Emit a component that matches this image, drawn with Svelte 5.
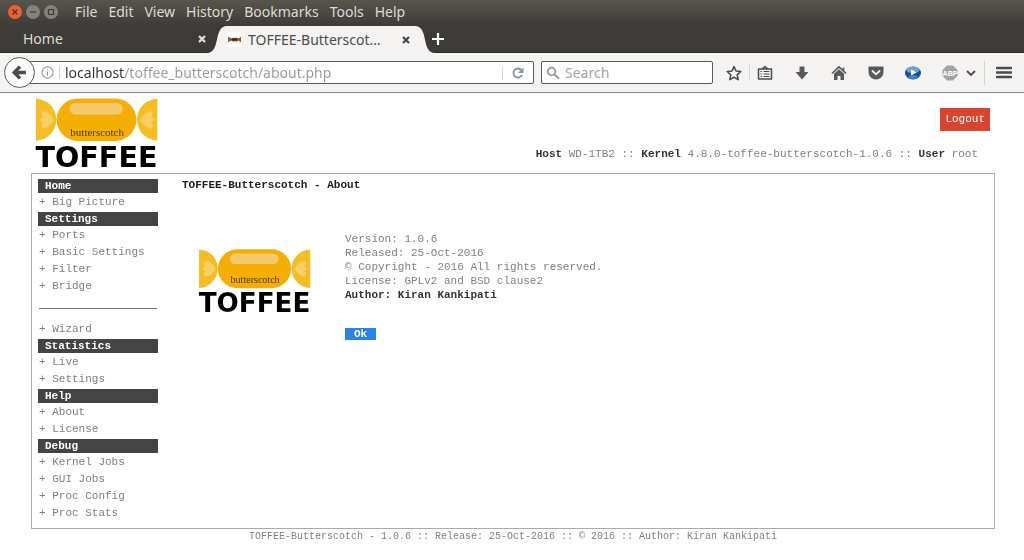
<script>
	const menus = ["File", "Edit", "View", "History", "Bookmarks", "Tools", "Help"];

	const sections = [
		{title: "Home", groups: [["Big Picture"]]},
		{title: "Settings", groups: [["Ports", "Basic Settings", "Filter", "Bridge"], ["Wizard"]]},
		{title: "Statistics", groups: [["Live", "Settings"]]},
		{title: "Help", groups: [["About", "License"]]},
		{title: "Debug", groups: [["Kernel Jobs", "GUI Jobs", "Proc Config", "Proc Stats"]]},
	];

	let url = $state("localhost/toffee_butterscotch/about.php");
	let query = $state("");
</script>

{#snippet logo()}
	<svg class="logo" viewBox="0 0 370 210" role="img" aria-label="Toffee butterscotch">
		<path d="M3 2C38 4 64 30 64 65S38 126 3 128Z" fill="#f6bd23" />
		<path d="M368 2C333 4 307 30 307 65S333 126 368 128Z" fill="#f6bd23" />
		<g fill="#f8dc93" opacity=".6">
			<ellipse cx="36" cy="54" rx="20" ry="10" transform="rotate(36 36 54)" />
			<ellipse cx="36" cy="65" rx="21" ry="9" />
			<ellipse cx="36" cy="76" rx="20" ry="10" transform="rotate(-36 36 76)" />
			<ellipse cx="337" cy="54" rx="20" ry="10" transform="rotate(-36 337 54)" />
			<ellipse cx="337" cy="65" rx="21" ry="9" />
			<ellipse cx="337" cy="76" rx="20" ry="10" transform="rotate(36 337 76)" />
		</g>
		<rect x="65" y="1" width="240" height="128" rx="64" fill="#f4ae04" />
		<rect x="104" y="15" width="160" height="34" rx="17" fill="#f5ca6c" />
		<text x="187" y="113" class="flavour">butterscotch</text>
		<text x="185" y="206" class="brand">TOFFEE</text>
	</svg>
{/snippet}

<div class="browser">
	<div class="menubar">
		<div class="window_buttons">
			<button class="close" aria-label="Close window">
				<svg viewBox="0 0 14 14"><path d="M4.5 4.5l5 5m0-5l-5 5" /></svg>
			</button>
			<button aria-label="Minimize window">
				<svg viewBox="0 0 14 14"><path d="M4 7h6" /></svg>
			</button>
			<button aria-label="Maximize window">
				<svg viewBox="0 0 14 14"><path d="M4.500 4.500h5v5h-5z" /></svg>
			</button>
		</div>
		{#each menus as menu}
			<button class="menu">{menu}</button>
		{/each}
	</div>

	<div class="tabs">
		<div class="tab">
			<button class="tab_title">Home</button>
			<button class="tab_close" aria-label="Close Home">
				<svg viewBox="0 0 10 10"><path d="M2 2l6 6m0-6l-6 6" /></svg>
			</button>
		</div>
		<div class="tab active">
			<svg class="ear" viewBox="0 0 20 27"><path d="M0 27C14 27 6 0 20 0V27Z" /></svg>
			<svg class="favicon" viewBox="0 0 16 16">
				<path d="M0 0h16v16H0z" fill="#fff" />
				<path d="M1 5l4 2 1-1h5l1 1 3-2v6l-3-2-1 1H6L5 9l-4 2z" fill="#8b5a36" />
				<path d="M5 7h6v2H5z" fill="#4b2410" />
			</svg>
			<button class="tab_title">TOFFEE-Butterscot…</button>
			<button class="tab_close" aria-label="Close TOFFEE-Butterscotch">
				<svg viewBox="0 0 10 10"><path d="M2 2l6 6m0-6l-6 6" /></svg>
			</button>
			<svg class="ear" viewBox="0 0 20 27"><path d="M20 27C6 27 14 0 0 0V27Z" /></svg>
		</div>
		<button class="new_tab" aria-label="New tab">
			<svg viewBox="0 0 14 14"><path d="M7 1v12M1 7h12" /></svg>
		</button>
	</div>

	<div class="toolbar">
		<button class="back" aria-label="Back">
			<svg viewBox="0 0 16 16"><path d="M8.500 2.500L3 8l5.500 5.500M3.500 8H14" /></svg>
		</button>
		<div class="url_bar">
			<svg class="info" viewBox="0 0 14 14">
				<circle cx="7" cy="7" r="6" />
				<path d="M7 6v4.500M7 3.500v1.200" />
			</svg>
			<input type="text" aria-label="Address" bind:value={url} />
			<button class="reload" aria-label="Reload">
				<svg viewBox="0 0 14 14">
					<path d="M10.500 4.200A4.500 4.500 0 1 0 11 9" fill="none" stroke="#8795a5" stroke-width="1.800" />
					<path d="M12.500 1.500V7H7z" fill="#8795a5" />
				</svg>
			</button>
		</div>
		<div class="search_bar">
			<svg viewBox="0 0 14 14"><circle cx="5.500" cy="5.500" r="3.800" /><path d="M8.500 8.500L13 12.500" /></svg>
			<input type="text" aria-label="Search" placeholder="Search" bind:value={query} />
		</div>
		<div class="tools">
			<button aria-label="Bookmark this page">
				<svg viewBox="0 0 16 16"><path d="M8 1.500l2 4.500 4.800.5-3.600 3.300 1 4.800L8 12.200l-4.200 2.400 1-4.800L1.200 6.500 6 6z" fill="none" stroke="#4c4c4c" stroke-width="1.600" stroke-linejoin="round" /></svg>
			</button>
			<button class="divided" aria-label="Bookmarks">
				<svg viewBox="0 0 16 16">
					<path d="M1.500 4h13v10h-13zM5 4l3-2.500L11 4" fill="none" stroke="#4c4c4c" stroke-width="1.500" stroke-linejoin="round" />
					<path d="M3.500 6.500H5M6.500 6.500h6M3.500 9H5M6.500 9h6M3.500 11.500H5M6.500 11.500h6" stroke="#4c4c4c" stroke-width="1.200" />
				</svg>
			</button>
			<button aria-label="Downloads">
				<svg viewBox="0 0 16 16"><path d="M5.500 1.500h5V7h4L8 14.500 1.500 7h4z" fill="#5a5a5a" /></svg>
			</button>
			<button aria-label="Home page">
				<svg viewBox="0 0 16 16">
					<path d="M1 8.500L8 2l7 6.500M12.500 2.500v4" fill="none" stroke="#5a5a5a" stroke-width="1.700" />
					<path d="M3 8.800L8 4.300l5 4.500V15H9.500v-4h-3v4H3z" fill="#5a5a5a" />
				</svg>
			</button>
			<button aria-label="Save to Pocket">
				<svg viewBox="0 0 16 16">
					<path d="M1.500 1.500h13q1 0 1 1V7a7.500 7.500 0 0 1-15 0V2.500q0-1 1-1z" fill="#5a5a5a" />
					<path d="M4.500 6L8 9.300 11.500 6" fill="none" stroke="#f4f3f2" stroke-width="1.800" stroke-linecap="round" />
				</svg>
			</button>
			<button aria-label="Video player">
				<svg viewBox="0 0 16 16">
					<ellipse cx="8" cy="8" rx="8" ry="6.500" fill="#164f97" />
					<ellipse cx="8" cy="5" rx="6.500" ry="3.300" fill="#6da3d8" />
					<ellipse cx="8" cy="12" rx="4.500" ry="2" fill="#2f88cf" />
					<path d="M6 4.500l5.500 3L6 10.500z" fill="#fff" />
				</svg>
			</button>
			<button aria-label="Adblock Plus">
				<svg viewBox="0 0 16 16">
					<path d="M5 .5h6L15.500 5v6L11 15.500H5L.5 11V5z" fill="#a3a3a3" />
					<text x="8" y="11" class="abp">ABP</text>
				</svg>
			</button>
			<button class="more" aria-label="Adblock menu">
				<svg viewBox="0 0 10 10"><path d="M1 3l4 4 4-4" fill="none" stroke="#4c4c4c" stroke-width="1.800" /></svg>
			</button>
			<button class="divided app_menu" aria-label="Open menu">
				<svg viewBox="0 0 16 16"><path d="M1 3h14M1 7.500h14M1 12h14" stroke="#4c4c4c" stroke-width="2.600" stroke-linecap="round" /></svg>
			</button>
		</div>
	</div>
</div>

<div class="page">
	<header>
		{@render logo()}
		<div class="session">
			<button class="logout">Logout</button>
			<div class="host">
				<b>Host</b> WD-1TB2 :: <b>Kernel</b> 4.8.0-toffee-butterscotch-1.0.6 :: <b>User</b> root
			</div>
		</div>
	</header>

	<div class="frame">
		<nav>
			{#each sections as section}
				<h2>{section.title}</h2>
				{#each section.groups as items, i}
					{#if i > 0}<hr />{/if}
					<ul>
						{#each items as item}
							<li><a href="#{item}">+ {item}</a></li>
						{/each}
					</ul>
				{/each}
			{/each}
		</nav>

		<main>
			<h1>TOFFEE-Butterscotch - About</h1>
			<div class="about">
				{@render logo()}
				<div class="details">
					<p>
						Version: 1.0.6<br />
						Released: 25-Oct-2016<br />
						© Copyright - 2016 All rights reserved.<br />
						License: GPLv2 and BSD clause2<br />
						<b>Author: Kiran Kankipati</b>
					</p>
					<button class="ok">Ok</button>
				</div>
			</div>
		</main>
	</div>

	<footer>TOFFEE-Butterscotch - 1.0.6 :: Release: 25-Oct-2016 :: © 2016 :: Author: Kiran Kankipati</footer>
</div>

<style>
	:global(body) { background: #fff; }

	button {
		padding: 0;
		border: none;
		background: none;
		color: inherit;
		font: inherit;
	}
	svg { display: block; flex: none; }

	/*
	 * BROWSER
	 * */
	.browser {
		font: 14px/20px "Noto Sans", "Open Sans", sans-serif;
		color: #dfdbd2;
		background: #3c3b37;
	}
	.menubar {
		display: flex;
		align-items: center;
		gap: 11px;
		height: 25px;
		padding: 0 8px 2px;
		box-sizing: border-box;
		background: linear-gradient(#57544c, #3e3d39);
	}
	.window_buttons {
		display: flex;
		gap: 4px;
		margin-right: 6px;
	}
	.window_buttons button {
		width: 14px;
		height: 14px;
		border-radius: 50%;
		background: #84827b;
	}
	.window_buttons .close { background: #ee5f32; }
	.window_buttons path {
		fill: none;
		stroke: #3c3b37;
		stroke-width: 1.2;
	}

	.tabs {
		display: flex;
		height: 28px;
		padding-top: 1px;
		box-sizing: border-box;
		border-bottom: 1px solid #2c2b28;
	}
	.tab {
		display: flex;
		align-items: center;
		width: 207px;
		padding: 0 0 0 23px;
		box-sizing: border-box;
	}
	.tab_title {
		flex: 1;
		text-align: left;
		white-space: nowrap;
	}
	.tab_close { width: 10px; height: 10px; }
	.tab_close path {
		stroke: currentColor;
		stroke-width: 2.4;
	}
	.tab.active {
		width: 228px;
		padding: 0;
		height: 27px;
		color: #4c4c4c;
		background: linear-gradient(#f4f3f2, #f4f3f2) center / calc(100% - 38px) 100% no-repeat;
	}
	.active .tab_close { margin-right: 4px; }
	.ear { width: 20px; height: 27px; }
	.ear path { fill: #f4f3f2; }
	.favicon {
		width: 15px;
		height: 15px;
		margin-right: 6px;
	}
	.new_tab {
		width: 14px;
		margin-left: -4px;
	}
	.new_tab path {
		stroke: #fff;
		stroke-width: 2.2;
	}

	.toolbar {
		display: flex;
		align-items: center;
		height: 40px;
		padding: 0 10px 0 4px;
		box-sizing: border-box;
		border-bottom: 1px solid #888;
		background: #f4f3f2;
		color: #4c4c4c;
	}
	.back {
		z-index: 1;
		width: 31px;
		height: 31px;
		margin-right: -6px;
		padding: 6px;
		box-sizing: border-box;
		border: 1px solid #5a5a5a;
		border-radius: 50%;
		background: #fbfbfb;
	}
	.back path {
		fill: none;
		stroke: #4c4c4c;
		stroke-width: 3.2;
	}
	.url_bar, .search_bar {
		display: flex;
		align-items: center;
		height: 23px;
		box-sizing: border-box;
		border: 1px solid #5a5a5a;
		border-radius: 2px;
		background: #fff;
	}
	.url_bar { flex: 1; padding-left: 11px; }
	.search_bar { width: 172px; margin: 0 13px 0 7px; padding-left: 4px; }
	input {
		flex: 1;
		min-width: 0;
		height: 20px;
		padding: 0;
		border: none;
		outline: none;
		background: none;
		color: #4c4c4c;
		font: inherit;
	}
	/* the host stays dark, the path is dimmed */
	.url_bar input {
		padding-left: 5px;
		background: linear-gradient(to right, #333 65px, #999 65px);
		background-clip: text;
		-webkit-text-fill-color: transparent;
	}
	input::placeholder { color: #a5a5a5; opacity: 1; }
	.info {
		width: 13px;
		height: 13px;
		padding-right: 5px;
		border-right: 1px solid #d0d0d0;
	}
	.info circle, .info path {
		fill: none;
		stroke: #999;
		stroke-width: 1.2;
	}
	.reload {
		padding: 0 8px;
		border-left: 1px solid #d8d8d8;
	}
	.reload svg { width: 14px; }
	.search_bar svg {
		width: 14px;
		margin-right: 5px;
	}
	.search_bar svg * {
		fill: none;
		stroke: #999;
		stroke-width: 1.8;
	}

	.tools { display: flex; align-items: center; }
	.tools button { margin-right: 21px; }
	.tools svg { width: 16px; }
	.tools button:first-child { margin-right: 7px; }
	.tools .divided {
		padding-left: 7px;
		border-left: 1px solid #d4d4d4;
	}
	.tools button:nth-last-child(3) { margin-right: 8px; }
	.tools .more { margin-right: 8px; }
	.tools .more svg { width: 10px; }
	.tools .app_menu {
		margin-right: 2px;
		padding: 4px 0 4px 11px;
	}
	.abp {
		fill: #fff;
		font: bold 7px "Liberation Sans", sans-serif;
		text-anchor: middle;
	}

	/*
	 * PAGE
	 * */
	.page {
		padding: 5px 29px 0 31px;
		font: 11px/14px "Liberation Mono", "Courier New", monospace;
		color: #808080;
	}
	.page b { color: #333; }
	.logo { overflow: visible; }
	.flavour {
		fill: #4d3a08;
		font: 33px "Liberation Serif", serif;
		text-anchor: middle;
	}
	.brand {
		fill: #000;
		font: bold 86px "DejaVu Sans", sans-serif;
		text-anchor: middle;
	}
	header {
		display: flex;
		justify-content: space-between;
		padding: 0 5px 5px 4px;
	}
	header .logo { width: 123px; height: 70px; }
	.session {
		display: flex;
		flex-direction: column;
		align-items: flex-end;
		padding-top: 10px;
	}
	.logout {
		padding: 4px 5px 5px;
		background: #d9442f;
		color: #fff;
	}
	.host { margin: 16px 12px 0 0; }

	.frame {
		display: flex;
		gap: 24px;
		padding: 5px 6px;
		border: 1px solid #aaa;
	}
	nav { width: 120px; flex: none; }
	nav h2 {
		margin: 0;
		padding-left: 7px;
		background: #444;
		color: #fff;
		font-size: 11px;
		line-height: 14px;
	}
	nav ul {
		margin: 0;
		padding: 1px;
		list-style: none;
	}
	nav li { line-height: 17px; }
	nav a {
		color: inherit;
		text-decoration: none;
	}
	nav hr {
		margin: 12px 1px 11px;
		border: none;
		border-top: 1px solid #777;
	}

	main { flex: 1; }
	h1 {
		margin: 0;
		color: #222;
		font-size: 11px;
		line-height: 12px;
	}
	.about {
		display: flex;
		gap: 34px;
		padding: 41px 16px;
	}
	.about .logo { width: 113px; height: 64px; margin-top: 17px; }
	.details p { margin: 0 0 25px; }
	.ok {
		width: 31px;
		background: #2a82e4;
		color: #fff;
		font-weight: bold;
		line-height: 12px;
	}
	footer {
		padding-bottom: 16px;
		font-size: 10px;
		line-height: 16px;
		text-align: center;
	}
</style>
